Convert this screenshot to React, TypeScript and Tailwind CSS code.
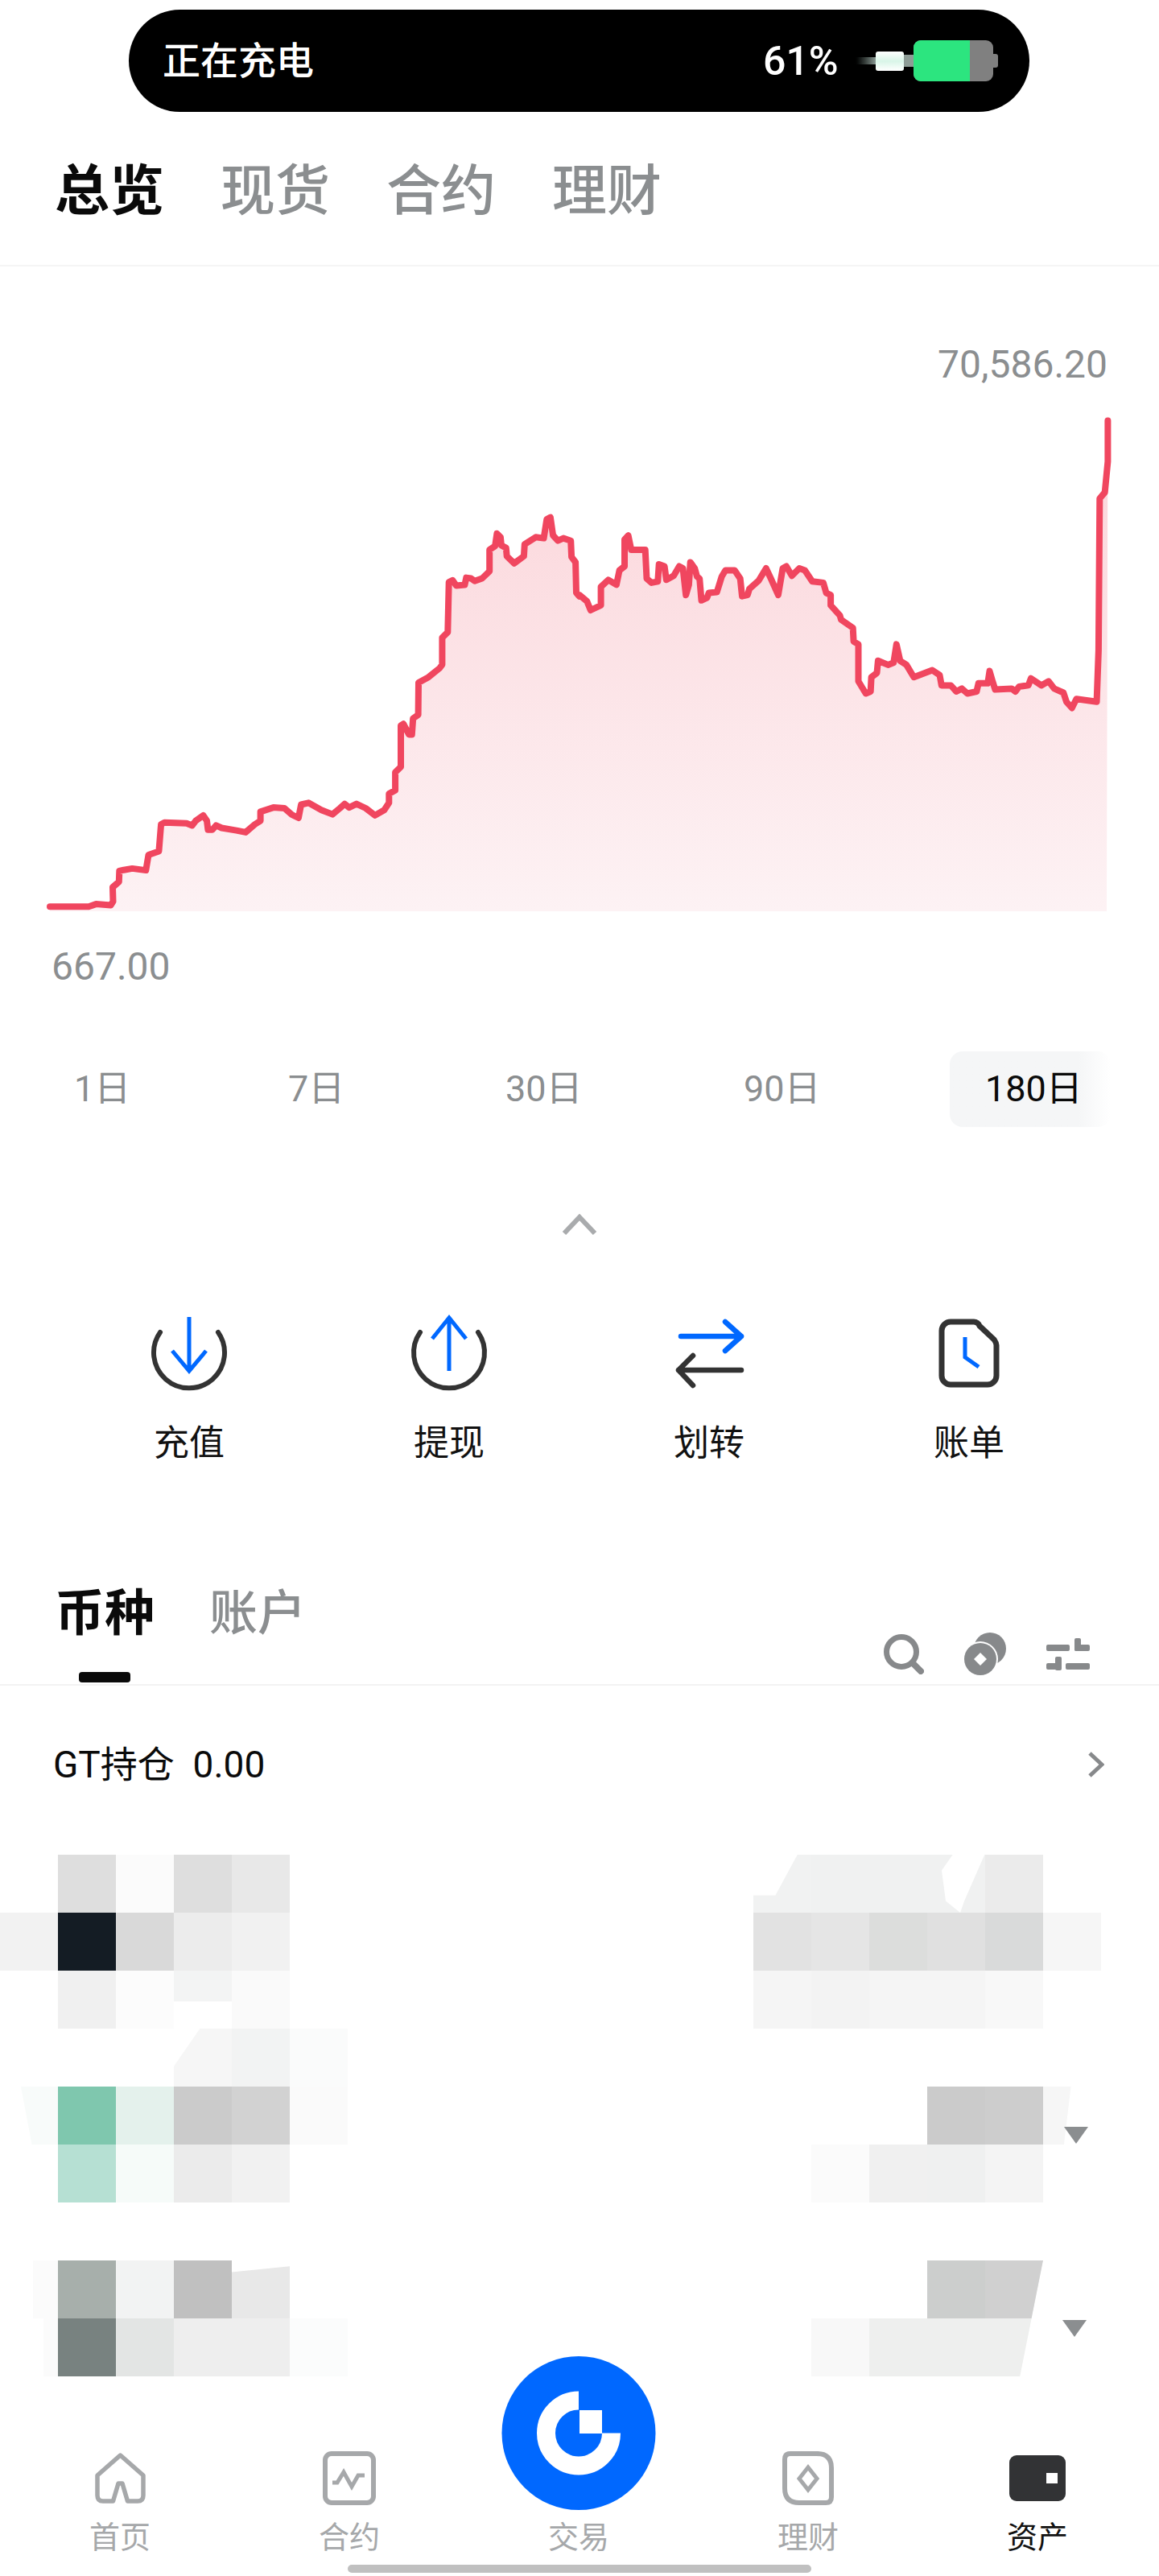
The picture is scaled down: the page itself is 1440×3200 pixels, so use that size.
const leftPts = [[135,1404],[240,1404],[260,1397],[300,1400],[306,1390],[305,1350],[322,1335],[323,1305],[335,1302],[358,1298],[395,1303],[402,1260],[430,1250],[436,1175],[445,1170],[505,1172],[520,1178],[530,1165],[550,1150],[560,1165],[563,1190],[575,1190],[585,1178],[600,1185],[640,1192],[665,1197],[690,1175],[705,1165],[705,1140],[740,1128],[770,1130],[790,1148],[808,1157],[815,1120],[835,1115],[870,1135],[900,1147],[920,1130],[933,1118],[945,1128],[965,1118],[990,1130],[1015,1150],[1040,1135],[1053,1115],[1053,1090],[1070,1080],[1070,1030],[1085,1015],[1085,900],[1092,895],[1107,925],[1115,925],[1118,880],[1132,870],[1133,780],[1160,765],[1190,740],[1197,730],[1197,655],[1212,640],[1215,500],[1225,495],[1235,510],[1258,508],[1262,488],[1275,490],[1285,497],[1305,490],[1325,470],[1325,410],[1340,400],[1345,365],[1355,375],[1357,398],[1370,405],[1372,428],[1392,448],[1418,428],[1420,395],[1450,375],[1472,378],[1480,325],[1490,320],[1497,370],[1510,385],[1525,378],[1545,385],[1547,430],[1558,445],[1560,530],[1568,540]];
const rightPts = [[0,665],[20,680],[30,702],[58,690],[58,645],[78,628],[100,640],[108,605],[122,595],[122,530],[132,520],[140,555],[178,555],[182,625],[195,635],[212,632],[215,590],[230,595],[235,628],[255,618],[270,595],[280,600],[288,665],[296,640],[300,585],[312,600],[318,620],[325,625],[330,678],[345,672],[350,660],[372,658],[385,620],[395,605],[420,605],[435,625],[440,668],[455,665],[460,650],[485,630],[505,600],[518,625],[538,665],[550,600],[560,595],[575,618],[595,600],[610,605],[630,632],[660,635],[668,660],[680,665],[680,690],[705,715],[708,725],[740,745],[742,778],[755,785],[755,875],[775,905],[788,900],[790,865],[805,855],[808,825],[835,835],[850,830],[858,785],[868,825],[885,835],[905,865],[955,848],[975,860],[980,885],[1005,885],[1020,900],[1035,893],[1050,905],[1075,900],[1080,880],[1105,880],[1110,850],[1118,875],[1125,895],[1170,893],[1180,900],[1190,888],[1215,885],[1222,868],[1250,885],[1270,875],[1285,893],[1310,903],[1318,925],[1333,940],[1345,918],[1400,925],[1405,800],[1408,430],[1422,415],[1430,340],[1430,240]];

const linePts = [
  ...leftPts.map(([x, y]) => `${(x * 0.459).toFixed(1)},${(500 + y * 0.446).toFixed(1)}`),
  ...rightPts.map(([x, y]) => `${(720 + x * 0.459).toFixed(1)},${(400 + y * 0.51).toFixed(1)}`),
].join(" ");

const ranges = [
  { label: "1日" },
  { label: "7日" },
  { label: "30日" },
  { label: "90日" },
];

// blurred holdings block: each row is a strip of 72px squares keyed by column
const mosaic: Record<number, string>[] = [
  {
    1: "bg-[#dedede]", 2: "bg-[#fbfbfb]", 3: "bg-[#dedede]", 4: "bg-[#e8e8e8]",
    13: "bg-[#f1f2f2] [clip-path:polygon(76%_0,100%_0,100%_100%,0_100%,0_70%,38%_70%)]",
    14: "bg-[#f0f1f1]", 15: "bg-[#f0f1f1]",
    16: "bg-[#f0f1f1] [clip-path:polygon(0_0,44%_0,25%_27%,32%_80%,57%_100%,64%_80%,99%_0,100%_0,100%_100%,0_100%)]",
    17: "bg-[#ebebeb]",
  },
  {
    0: "bg-[#f2f2f2]", 1: "bg-[#141c24]", 2: "bg-[#d9d9d9]", 3: "bg-[#ececec]", 4: "bg-[#f1f1f1]",
    13: "bg-[#e2e2e2]", 14: "bg-[#e5e5e5]", 15: "bg-[#dcdddc]", 16: "bg-[#e0e0e0]", 17: "bg-[#d9dada]", 18: "bg-[#f6f6f6]",
  },
  {
    1: "bg-[#f0f0f0]", 2: "bg-[#fcfcfc]",
    3: "bg-[#f3f4f4] [clip-path:polygon(0_0,100%_0,100%_53%,0_53%)]",
    4: "bg-[#fafafa]",
    13: "bg-[#f5f5f5]", 14: "bg-[#f3f3f3]", 15: "bg-[#f5f5f5]", 16: "bg-[#f5f5f5]", 17: "bg-[#f8f8f8]",
  },
  {
    3: "bg-[#f6f6f6] [clip-path:polygon(45%_0,100%_0,100%_100%,0_100%,0_65%)]",
    4: "bg-[#f2f3f3]", 5: "bg-[#fafbfb]",
  },
  {
    0: "bg-[#f8fbfa] [clip-path:polygon(36%_0,100%_0,100%_100%,55%_100%)]",
    1: "bg-[#7fc7ae]", 2: "bg-[#e4f1ec]", 3: "bg-[#cbcbcb]", 4: "bg-[#d2d2d2]", 5: "bg-[#fafafa]",
    16: "bg-[#cbcbcb]", 17: "bg-[#cdcdcd]",
    18: "bg-[#f6f6f6] [clip-path:polygon(0_0,48%_0,36%_100%,0_100%)]",
  },
  {
    1: "bg-[#b6e0d3]", 2: "bg-[#f6fbf9]", 3: "bg-[#ebebeb]", 4: "bg-[#f1f1f1]",
    14: "bg-[#fbfbfb]", 15: "bg-[#f0f0f0]", 16: "bg-[#eff0f0]", 17: "bg-[#f4f4f4]",
  },
  {},
  {
    0: "bg-[#fbfbfb] [clip-path:polygon(57%_0,100%_0,100%_100%,57%_100%)]",
    1: "bg-[#a7afab]", 2: "bg-[#f2f3f3]", 3: "bg-[#c0c0c0]",
    4: "bg-[#e8e8e8] [clip-path:polygon(0_20%,100%_10%,100%_100%,0_100%)]",
    16: "bg-[#cccecd]", 17: "bg-[#d0d0d0] [clip-path:polygon(0_0,100%_0,80%_100%,0_100%)]",
  },
  {
    0: "bg-[#fbfbfb] [clip-path:polygon(75%_0,100%_0,100%_100%,75%_100%)]",
    1: "bg-[#788280]", 2: "bg-[#e3e5e4]", 3: "bg-[#eeeeee]", 4: "bg-[#eeeeee]", 5: "bg-[#fbfcfc]",
    14: "bg-[#f8f8f8]", 15: "bg-[#eeefee]", 16: "bg-[#eeefee]",
    17: "bg-[#eeefee] [clip-path:polygon(0_0,80%_0,60%_100%,0_100%)]",
  },
];

function ChargingPill() {
  return (
    <div className="ml-[160px] mt-[12px] flex h-[127px] w-[1119px] items-center rounded-[64px] bg-black pl-[42px] text-white">
      <span className="text-[47px] leading-none font-medium">正在充电</span>
      <span className="ml-[558px] text-[50px] leading-none font-medium">61%</span>
      <div className="ml-[18px] flex items-center">
        <div className="h-[9px] w-[28px] bg-linear-to-r from-black to-[#8a9a94]" />
        <div className="h-[24px] w-[35px] rounded-[3px] bg-linear-to-b from-white via-[#d8f5e8] to-white" />
        <div className="h-[15px] w-[12px] bg-[#8d9c96]" />
        <div className="flex h-[51px] w-[99px] overflow-hidden rounded-[9px] bg-[#808080]">
          <div className="h-full w-[70px] bg-[#2ce57f]" />
        </div>
        <div className="h-[17px] w-[6px] rounded-r-[3px] bg-[#808080]" />
      </div>
    </div>
  );
}

function Chart() {
  return (
    <svg viewBox="0 481 1440 692" className="block h-[692px] w-[1440px]">
      <defs>
        <linearGradient id="area" gradientUnits="userSpaceOnUse" x1="0" y1="500" x2="0" y2="1132">
          <stop offset="0" stopColor="#fbd3d8" />
          <stop offset="1" stopColor="#fdf2f4" />
        </linearGradient>
      </defs>
      <polygon points={`${linePts} 1375,1132 62,1132`} fill="url(#area)" />
      <polyline points={linePts} fill="none" stroke="#f0465f" strokeWidth="8" strokeLinejoin="round" strokeLinecap="round" />
    </svg>
  );
}

function DepositIcon() {
  return (
    <svg width="100" height="100" viewBox="0 0 100 100" fill="none" strokeLinecap="round">
      <path d="M14 25A44 44 0 1 0 86 25" stroke="#333" strokeWidth="6" />
      <path d="M50 6V72M29 48L50 73L71 48" stroke="#0068ff" strokeWidth="5" strokeLinecap="butt" />
    </svg>
  );
}

function WithdrawIcon() {
  return (
    <svg width="100" height="100" viewBox="0 0 100 100" fill="none" strokeLinecap="round">
      <path d="M14 25A44 44 0 1 0 86 25" stroke="#333" strokeWidth="6" />
      <path d="M50 8V73M29 33L50 7L71 33" stroke="#0068ff" strokeWidth="5" strokeLinecap="butt" />
    </svg>
  );
}

function TransferIcon() {
  return (
    <svg width="100" height="100" viewBox="0 0 100 100" fill="none" strokeLinecap="round" strokeLinejoin="round">
      <path d="M15 30H90M70 12L90 30L70 48" stroke="#0068ff" strokeWidth="6.5" />
      <path d="M90 72H12M30 54L12 72L30 91" stroke="#333" strokeWidth="6.5" />
    </svg>
  );
}

function BillIcon() {
  return (
    <svg width="100" height="100" viewBox="0 0 100 100" fill="none">
      <path d="M27 12H56C59 12 62 14 63 17L81 34C83 37 84 38 84 41V79C84 85 79 90 73 90H27C21 90 16 85 16 79V23C16 17 21 12 27 12Z" stroke="#333" strokeWidth="7" />
      <path d="M45 31V56L62 68" stroke="#0068ff" strokeWidth="5" />
    </svg>
  );
}

const actions = [
  { label: "充值", icon: <DepositIcon /> },
  { label: "提现", icon: <WithdrawIcon /> },
  { label: "划转", icon: <TransferIcon /> },
  { label: "账单", icon: <BillIcon /> },
];

function ListTools() {
  return (
    <div className="ml-auto mb-[10px] flex items-center gap-[50px] pr-[86px]">
      <svg width="50" height="50" viewBox="0 0 50 50" fill="none" stroke="#87898b">
        <circle cx="22" cy="22" r="18.5" strokeWidth="7" />
        <path d="M36 36L46 46" strokeWidth="8" strokeLinecap="round" />
      </svg>
      <svg width="52" height="54" viewBox="0 0 52 54" fill="#87898b">
        <circle cx="32" cy="20" r="20" />
        <circle cx="20" cy="33" r="22" fill="#fff" />
        <circle cx="20" cy="33" r="20" />
        <path d="M20 25L28 33L20 41L12 33Z" fill="#fff" />
      </svg>
      <svg width="54" height="40" viewBox="0 0 54 40" fill="#87898b">
        <rect x="0" y="8" width="29" height="8" rx="2" />
        <rect x="35" y="0" width="8" height="16" rx="2" />
        <rect x="35" y="8" width="19" height="8" rx="2" />
        <rect x="0" y="31" width="18" height="8" rx="2" />
        <rect x="11" y="23" width="8" height="17" rx="2" />
        <rect x="24" y="31" width="30" height="8" rx="2" />
      </svg>
    </div>
  );
}

function Mosaic() {
  return (
    <div className="mt-[84px] grid grid-cols-[repeat(20,72px)] auto-rows-[72px]">
      {mosaic.flatMap((row, r) =>
        Array.from({ length: 20 }, (_, c) => (
          <div key={`${r}-${c}`} className={`relative ${row[c] ?? ""}`} />
        )),
      )}
    </div>
  );
}

function DownMark({ className }: { className: string }) {
  return (
    <svg width="30" height="21" viewBox="0 0 30 21" className={className} fill="#8b8e90">
      <path d="M0 0H30L15 21Z" />
    </svg>
  );
}

function HomeIcon() {
  return (
    <svg width="70" height="67" viewBox="0 0 70 67" fill="none" stroke="#a6a8aa" strokeWidth="5.5" strokeLinejoin="round">
      <path d="M35.5 5L64 30V55Q64 62 57 62H44.5L38 40H33L26.5 62H14Q7 62 7 55V30Z" />
    </svg>
  );
}

function ContractIcon() {
  return (
    <svg width="70" height="67" viewBox="0 0 70 67" fill="none" stroke="#a6a8aa">
      <rect x="5" y="3" width="60" height="61" rx="8" strokeWidth="6" />
      <path d="M14 39H20L28 26L38 44L46 30H54" strokeWidth="5" />
    </svg>
  );
}

function EarnIcon() {
  return (
    <svg width="70" height="67" viewBox="0 0 70 67" fill="none" stroke="#a6a8aa" strokeWidth="6">
      <path d="M13 3H46Q64 3 64 21V57Q64 64 57 64H24Q6 64 6 46V10Q6 3 13 3Z" />
      <path d="M35 20L46 34L35 48L24 34Z" strokeWidth="5" />
    </svg>
  );
}

function WalletIcon() {
  return (
    <svg width="70" height="67" viewBox="0 0 70 67">
      <rect x="0" y="5" width="70" height="57" rx="9" fill="#323335" />
      <rect x="46" y="27" width="14" height="13" fill="#fff" />
    </svg>
  );
}

function TradeButton() {
  return (
    <svg width="192" height="191" viewBox="0 0 192 191">
      <circle cx="96" cy="95.5" r="95.5" fill="#0068ff" />
      <path d="M96 55A40.5 40.5 0 1 0 136.5 95.5" fill="none" stroke="#fff" strokeWidth="23" />
      <rect x="97" y="67" width="28" height="29" fill="#fff" />
    </svg>
  );
}

function NavItem({ label, icon, active }: { label: string; icon: React.ReactNode; active?: boolean }) {
  return (
    <div className="flex flex-col items-center">
      {icon}
      <span className={`mt-[18px] text-[38px] leading-[44px] ${active ? "text-[#111]" : "text-[#a6a8aa]"}`}>{label}</span>
    </div>
  );
}

export default function App() {
  return (
    <div className="relative h-[3200px] w-[1440px] overflow-hidden bg-white font-[Roboto,'Noto_Sans_CJK_SC',sans-serif]">
      <ChargingPill />

      <div className="flex h-[192px] gap-[70px] border-b-2 border-[#f5f5f5] pt-[65px] pl-[68px] text-[68px] leading-[68px] font-medium text-[#8b8e90]">
        <span className="font-bold text-[#0a0a0a]">总览</span>
        <span>现货</span>
        <span>合约</span>
        <span>理财</span>
      </div>

      <div className="pt-[94px] pr-[64px] text-right text-[48px] leading-[56px] text-[#8b8e90]">70,586.20</div>
      <Chart />
      <div className="pl-[64px] text-[48px] leading-[56px] text-[#8b8e90]">667.00</div>

      <div className="mt-[77px] grid h-[94px] grid-cols-[266px_270px_296px_256px_200px] items-center pl-[92px] text-[45px] text-[#8b8e90]">
        {ranges.map((r) => (
          <span key={r.label}>{r.label}</span>
        ))}
        <span className="flex h-[94px] items-center rounded-[16px] bg-linear-to-r from-[#f5f6f7] from-80% to-white pl-[44px] text-[#0a0a0a]">
          180日
        </span>
      </div>

      <svg width="44" height="26" viewBox="0 0 44 26" fill="none" className="mx-auto mt-[108px]">
        <path d="M3 24L22 4L41 24" stroke="#a9abad" strokeWidth="6" />
      </svg>

      <div className="mt-[96px] grid grid-cols-[323px_323px_323px_323px] pl-[73.5px]">
        {actions.map((a) => (
          <div key={a.label} className="flex flex-col items-center">
            {a.icon}
            <span className="mt-[35px] text-[44px] leading-[56px] text-[#111]">{a.label}</span>
          </div>
        ))}
      </div>

      <div className="mt-[153px] flex items-end border-b-2 border-[#f3f3f3]">
        <div className="ml-[68px] flex flex-col items-center">
          <span className="text-[62px] leading-[62px] font-bold text-[#0a0a0a]">币种</span>
          <div className="mt-[41px] mb-[2px] h-[13px] w-[64px] rounded-[4px] bg-[#0a0a0a]" />
        </div>
        <span className="mb-[56px] ml-[68px] text-[60px] leading-[62px] font-medium text-[#8b8e90]">账户</span>
        <ListTools />
      </div>

      <div className="flex items-center pt-[70px] pr-[68px] pl-[66px]">
        <span className="text-[46px] leading-[56px] text-[#0a0a0a]">GT持仓&nbsp;&nbsp;0.00</span>
        <svg width="20" height="32" viewBox="0 0 20 32" fill="none" className="ml-auto">
          <path d="M2 2L17 16L2 30" stroke="#87898b" strokeWidth="5" />
        </svg>
      </div>

      <Mosaic />

      <div className="relative z-10 mt-[93px] grid grid-cols-[repeat(5,285px)] items-start pl-[6.5px]">
        <NavItem label="首页" icon={<HomeIcon />} />
        <NavItem label="合约" icon={<ContractIcon />} />
        <div className="-mt-[118px] flex flex-col items-center">
          <TradeButton />
          <span className="mt-[12px] text-[38px] leading-[44px] text-[#a6a8aa]">交易</span>
        </div>
        <NavItem label="理财" icon={<EarnIcon />} />
        <NavItem label="资产" icon={<WalletIcon />} active />
      </div>

      <div className="mx-auto mt-[12px] h-[10px] w-[576px] rounded-full bg-[#c0c0c0]" />

      {/* price direction marks sit on top of the blurred rows */}
      <DownMark className="absolute top-[2642px] left-[1322px]" />
      <DownMark className="absolute top-[2882px] left-[1320px]" />
    </div>
  );
}
